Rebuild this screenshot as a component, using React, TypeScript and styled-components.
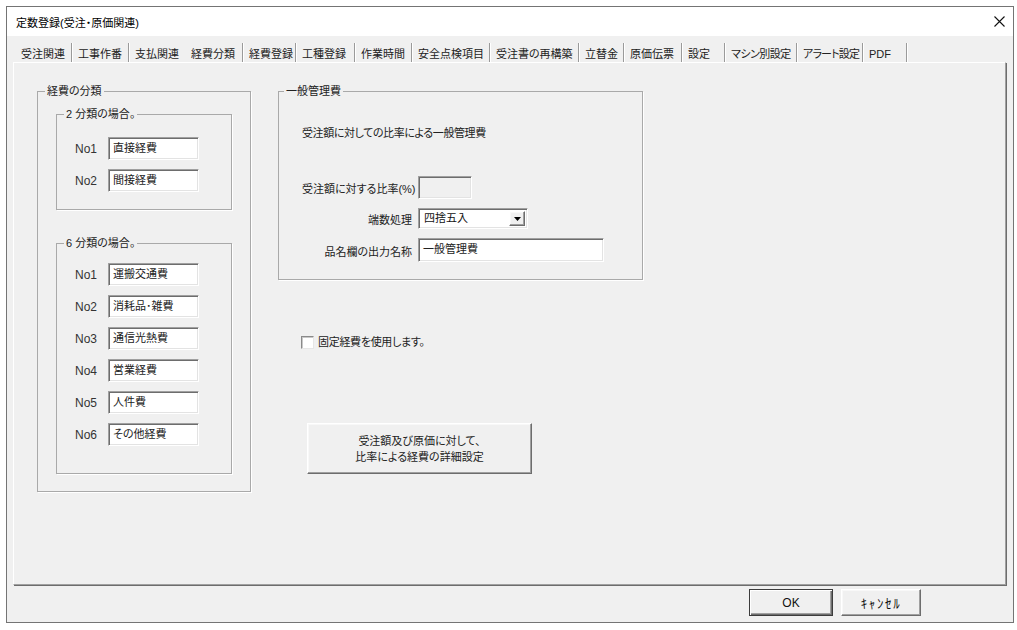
import React from "react";
import styled, { createGlobalStyle, css } from "styled-components";

const Global = createGlobalStyle`
  html, body { margin: 0; padding: 0; background: #ffffff; }
  body {
    font-family: "Liberation Sans", "Noto Sans CJK JP", sans-serif;
    font-size: 11px;
    color: #1f1f1f;
    font-feature-settings: "palt";
  }
  * { box-sizing: border-box; }
`;

const sunken = css`
  border-style: solid;
  border-width: 1px;
  border-color: #a0a0a0 #ffffff #ffffff #a0a0a0;
  box-shadow: inset 1px 1px 0 #6d6d6d, inset -1px -1px 0 #e3e3e3;
`;

const raised = css`
  border-style: solid;
  border-width: 1px;
  border-color: #ffffff #6d6d6d #6d6d6d #ffffff;
  box-shadow: inset -1px -1px 0 #a0a0a0, inset 1px 1px 0 #f8f8f8;
  background: #f0f0f0;
`;

const Window = styled.div`
  margin: 6px 0 0 6px;
  width: 1008px;
  height: 617px;
  border: 1px solid #747474;
  background: #f0f0f0;
  display: flex;
  flex-direction: column;
`;

const TitleBar = styled.div`
  height: 29px;
  background: #ffffff;
  display: flex;
  align-items: center;
  justify-content: space-between;
  padding: 0 8px 0 9px;
  font-size: 11px;
  color: #000;
`;

const Body = styled.div`
  flex: 1;
  display: flex;
  flex-direction: column;
  padding: 7px 6px 0 6px;
`;

const TabStrip = styled.div`
  display: flex;
  height: 19px;
  padding-left: 2px;
`;

const Tab = styled.div<{ $w: number; $sep: boolean; $ls: number }>`
  width: ${(p) => p.$w}px;
  height: 19px;
  padding: 3px 0 0 6px;
  line-height: 16px;
  white-space: nowrap;
  overflow: hidden;
  font-size: 11px;
  letter-spacing: ${(p) => p.$ls}px;
  color: #222;
  border-right: ${(p) => (p.$sep ? "1px solid #9a9a9a" : "1px solid transparent")};
  box-shadow: ${(p) => (p.$sep ? "1px 0 0 #ffffff" : "none")};
`;

const Panel = styled.div`
  width: 993px;
  height: 523px;
  border-style: solid;
  border-width: 1px;
  border-color: #ffffff #a0a0a0 #a0a0a0 #ffffff;
  box-shadow: 1px 1px 0 #6d6d6d;
  display: flex;
  align-items: flex-start;
  gap: 27px;
  padding: 20px 0 0 23px;
`;

const Frame = styled.fieldset<{ $w: number }>`
  margin: 0;
  padding: 0;
  width: ${(p) => p.$w}px;
  min-inline-size: 0;
  border: 1px solid #a9a9a9;
  box-shadow: 1px 1px 0 #ffffff;
`;

const Legend = styled.legend<{ $ml: number }>`
  margin-left: ${(p) => p.$ml}px;
  padding: 0 2px;
  line-height: 16px;
  font-size: 11px;
  color: #222;
`;

const FrameBody = styled.div<{ $pad: string }>`
  padding: ${(p) => p.$pad};
  display: flex;
  flex-direction: column;
`;

const InnerGap = styled.div`
  height: 25px;
`;

const RowList = styled.div`
  display: flex;
  flex-direction: column;
  gap: 9px;
`;

const NoRow = styled.div`
  display: flex;
  align-items: center;
  height: 23px;
`;

const NoLabel = styled.span`
  width: 33px;
  font-family: "Liberation Sans", sans-serif;
  font-size: 12px;
  color: #333;
  padding-top: 1px;
`;

const TextBox = styled.div<{ $w: number; $h: number; $disabled?: boolean }>`
  ${sunken};
  width: ${(p) => p.$w}px;
  height: ${(p) => p.$h}px;
  background: ${(p) => (p.$disabled ? "#f0f0f0" : "#ffffff")};
  padding: 3px 0 0 4px;
  font-size: 11px;
  line-height: 15px;
  color: #222;
  white-space: nowrap;
  overflow: hidden;
`;

const RightCol = styled.div`
  display: flex;
  flex-direction: column;
  align-items: flex-start;
`;

const Desc = styled.div`
  line-height: 16px;
  font-size: 11px;
  letter-spacing: -0.4px;
  color: #222;
`;

const FormGrid = styled.div`
  margin-top: 35px;
  display: grid;
  grid-template-columns: 110px auto;
  column-gap: 6px;
  row-gap: 9px;
  align-items: center;
`;

const FormLabel = styled.span`
  text-align: right;
  font-size: 11px;
  color: #222;
  white-space: nowrap;
  padding-top: 1px;
`;

const Select = styled.div`
  ${sunken};
  width: 110px;
  height: 21px;
  background: #ffffff;
  display: flex;
  align-items: stretch;
  padding: 2px;
`;

const SelectText = styled.span`
  flex: 1;
  padding-left: 3px;
  line-height: 15px;
  font-size: 11px;
  color: #111;
`;

const DropBtn = styled.div`
  ${raised};
  width: 16px;
  display: flex;
  align-items: center;
  justify-content: center;
`;

const CheckRow = styled.label`
  margin: 55px 0 0 23px;
  display: flex;
  align-items: center;
  gap: 4px;
  height: 15px;
  line-height: 15px;
  font-size: 11px;
  letter-spacing: -0.3px;
  color: #222;
`;

const CheckBox = styled.span`
  width: 13px;
  height: 13px;
  background: #ffffff;
  border-style: solid;
  border-width: 1px;
  border-color: #8a8a8a #e6e6e6 #e6e6e6 #8a8a8a;
  box-shadow: inset 1px 1px 0 #c8c8c8;
`;

const BigButton = styled.button`
  ${raised};
  margin: 73px 0 0 29px;
  width: 225px;
  height: 51px;
  font-family: inherit;
  font-size: 11px;
  line-height: 16px;
  color: #222;
  padding: 1px 0 0;
  font-feature-settings: "palt";
`;

const Footer = styled.div`
  display: flex;
  justify-content: flex-end;
  gap: 8px;
  padding: 4px 86px 0 0;
`;

const DlgButton = styled.button<{ $w: number; $default?: boolean }>`
  ${raised};
  width: ${(p) => p.$w}px;
  height: 27px;
  font-family: "Liberation Sans", "Noto Sans CJK JP", sans-serif;
  font-size: 12px;
  color: #111;
  padding: 0;
  ${(p) =>
    p.$default &&
    css`
      border-color: #3c3c3c;
      box-shadow: inset 1px 1px 0 #ffffff, inset -1px -1px 0 #6d6d6d, inset -2px -2px 0 #a0a0a0;
    `}
`;

const Kana = styled.span`
  font-size: 13px;
  letter-spacing: 1.6px;
  font-feature-settings: normal;
`;

const tabs: { label: string; w: number; sep?: boolean; ls?: number }[] = [
  { label: "受注関連", w: 57 },
  { label: "工事作番", w: 57 },
  { label: "支払関連", w: 56, sep: false },
  { label: "経費分類", w: 58 },
  { label: "経費登録", w: 53 },
  { label: "工種登録", w: 59 },
  { label: "作業時間", w: 57 },
  { label: "安全点検項目", w: 78 },
  { label: "受注書の再構築", w: 89 },
  { label: "立替金", w: 45 },
  { label: "原価伝票", w: 58 },
  { label: "設定", w: 43 },
  { label: "マシン別設定", w: 72, ls: -0.5 },
  { label: "アラート設定", w: 66, ls: -0.8 },
  { label: "PDF", w: 44 },
];

const two = ["直接経費", "間接経費"];
const six = ["運搬交通費", "消耗品･雑費", "通信光熱費", "営業経費", "人件費", "その他経費"];

function CloseIcon() {
  return (
    <svg width="11" height="11" viewBox="0 0 11 11">
      <path d="M0.5 0.5 L10.5 10.5 M10.5 0.5 L0.5 10.5" stroke="#111" strokeWidth="1.1" fill="none" />
    </svg>
  );
}

function DownArrow() {
  return (
    <svg width="7" height="4" viewBox="0 0 7 4">
      <path d="M0 0 H7 L3.5 4 Z" fill="#000" />
    </svg>
  );
}

export default function App() {
  return (
    <>
      <Global />
      <Window>
        <TitleBar>
          <span>定数登録(受注・原価関連)</span>
          <CloseIcon />
        </TitleBar>
        <Body>
          <TabStrip>
            {tabs.map((t) => (
              <Tab key={t.label} $w={t.w} $sep={t.sep !== false} $ls={t.ls ?? 0}>
                {t.label}
              </Tab>
            ))}
          </TabStrip>
          <Panel>
            <Frame $w={214}>
              <Legend $ml={7}>経費の分類</Legend>
              <FrameBody $pad="7px 18px 17px 18px">
                <Frame $w={176}>
                  <Legend $ml={7}>2 分類の場合。</Legend>
                  <FrameBody $pad="15px 0 17px 18px">
                    <RowList>
                      {two.map((v, i) => (
                        <NoRow key={v}>
                          <NoLabel>No{i + 1}</NoLabel>
                          <TextBox $w={91} $h={23}>{v}</TextBox>
                        </NoRow>
                      ))}
                    </RowList>
                  </FrameBody>
                </Frame>
                <InnerGap />
                <Frame $w={176}>
                  <Legend $ml={7}>6 分類の場合。</Legend>
                  <FrameBody $pad="12px 0 27px 18px">
                    <RowList>
                      {six.map((v, i) => (
                        <NoRow key={v}>
                          <NoLabel>No{i + 1}</NoLabel>
                          <TextBox $w={91} $h={23}>{v}</TextBox>
                        </NoRow>
                      ))}
                    </RowList>
                  </FrameBody>
                </Frame>
              </FrameBody>
            </Frame>
            <RightCol>
              <Frame $w={365}>
                <Legend $ml={5}>一般管理費</Legend>
                <FrameBody $pad="26px 0 17px 23px">
                  <Desc>受注額に対しての比率による一般管理費</Desc>
                  <FormGrid>
                    <FormLabel>受注額に対する比率(%)</FormLabel>
                    <TextBox $w={54} $h={23} $disabled />
                    <FormLabel>端数処理</FormLabel>
                    <Select>
                      <SelectText>四捨五入</SelectText>
                      <DropBtn>
                        <DownArrow />
                      </DropBtn>
                    </Select>
                    <FormLabel>品名欄の出力名称</FormLabel>
                    <TextBox $w={186} $h={24}>一般管理費</TextBox>
                  </FormGrid>
                </FrameBody>
              </Frame>
              <CheckRow>
                <CheckBox />
                固定経費を使用します。
              </CheckRow>
              <BigButton>
                受注額及び原価に対して、
                <br />
                比率による経費の詳細設定
              </BigButton>
            </RightCol>
          </Panel>
          <Footer>
            <DlgButton $w={84} $default>
              OK
            </DlgButton>
            <DlgButton $w={80}>
              <Kana>ｷｬﾝｾﾙ</Kana>
            </DlgButton>
          </Footer>
        </Body>
      </Window>
    </>
  );
}
